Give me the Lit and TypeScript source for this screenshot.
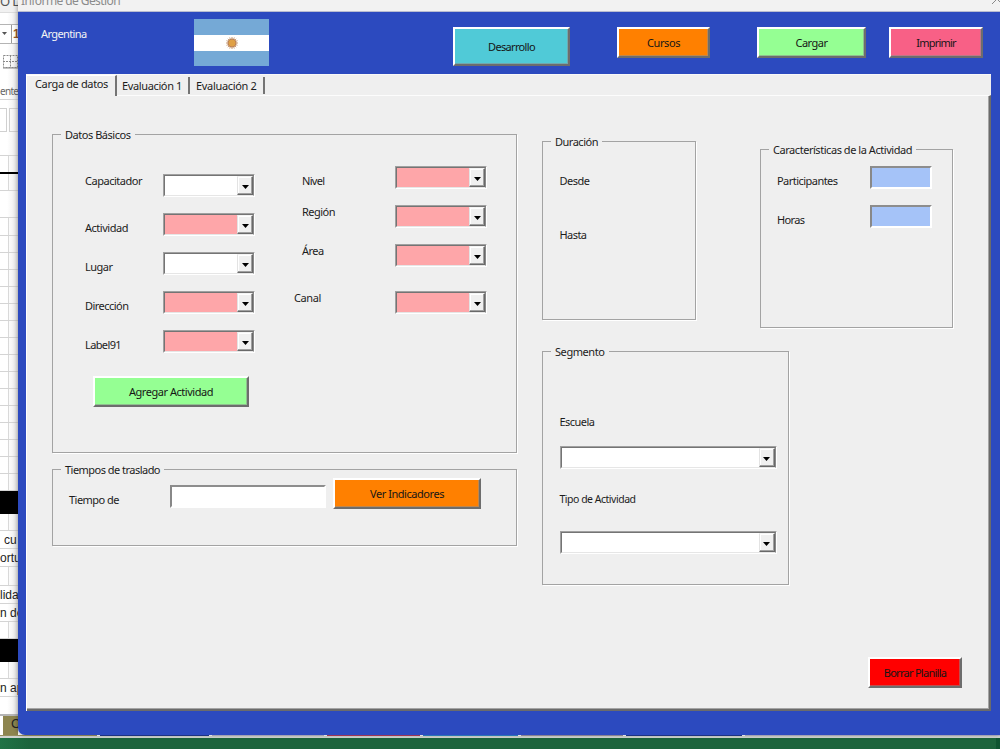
import { LitElement, html, css } from "lit";
import { customElement, property } from "lit/decorators.js";

/* A single line of text whose tracking is adjusted to take up a given width. */
@customElement("fit-text")
class FitText extends LitElement {
  @property({ type: Number }) w = 0;
  static styles = css`
    :host { display: block; white-space: pre; flex: none; }
    span { display: inline-block; }
  `;
  @property() text = "";
  render() {
    return html`<span>${this.text}</span>`;
  }
  updated() {
    const span = this.renderRoot.querySelector("span") as HTMLElement;
    span.style.letterSpacing = "0px";
    const natural = span.getBoundingClientRect().width;
    if (this.w && this.text.length > 1) {
      span.style.letterSpacing = (this.w - natural) / this.text.length + "px";
    }
  }
}

@customElement("combo-box")
class ComboBox extends LitElement {
  static styles = css`
    :host {
      display: flex; box-sizing: border-box; width: 92px; height: 23px; flex: none;
      background: #fff; border: 1px solid; border-color: #a0a0a0 #fff #fff #a0a0a0;
    }
    :host([pink]) { background: #fea6a9; }
    :host([wide]) { width: 217px; }
    .in { flex: 1; display: flex; justify-content: flex-end; border: 1px solid; border-color: #747474 #8a8a8a #e6e6e6 #747474; }
    .btn {
      box-sizing: border-box; width: 16px; display: flex; align-items: center; justify-content: center;
      background: #f0f0f0; border: 1px solid; border-color: #f4f4f4 #696969 #696969 #e3e3e3;
      box-shadow: inset -1px -1px 0 #a0a0a0, inset 1px 1px 0 #fff;
    }
    svg { display: block; margin-top: 2px; }
  `;
  render() {
    return html`<div class="in"><div class="btn"><svg width="7" height="4" viewBox="0 0 7 4"><path d="M0 0H7L3.5 4Z" fill="#000" /></svg></div></div>`;
  }
}

const t = (text: string, w: number) => html`<fit-text .text=${text} .w=${w}></fit-text>`;

@customElement("app-root")
class AppRoot extends LitElement {
  static styles = css`
    :host {
      display: block; position: relative; width: 1000px; height: 749px; overflow: hidden;
      background: #fff; font: 11px/16px "Noto Sans", "DejaVu Sans", sans-serif; color: #1c1c1c;
    }
    .desk { display: flex; flex-direction: column; height: 749px; }
    .sheet { width: 18px; height: 735px; overflow: hidden; display: flex; flex-direction: column; background: linear-gradient(90deg, #fff 40%, #e9e9e9); }
    .sheet > * { box-sizing: border-box; flex: none; white-space: nowrap; overflow: hidden; }
    .top { height: 13px; border-bottom: 1px solid #ddd; background: #f1f1f1; font-size: 13px; line-height: 4px; color: #555; }
    .top span { display: block; margin-top: -1px; letter-spacing: -0.6px; }
    .fontbox { margin-top: 11px; height: 20px; border: 1px solid #b4b4b4; border-width: 1px 0; display: flex; background: #fff; }
    .fontbox svg { margin: 7px 3px 0 2px; flex: none; }
    .fontbox b { border-left: 1px solid #999; padding-left: 1px; color: #965a2d; font: bold 12px/18px "Liberation Sans", Arial, sans-serif; }
    .borders { margin: 11px 0 0 3px; height: 14px; }
    .borders svg { display: block; }
    .ente { margin-top: 13px; height: 18px; border-bottom: 1px solid #d5d5d5; color: #666; font-size: 10px; line-height: 18px; letter-spacing: -0.7px; }
    .fx { margin-top: 8px; height: 24px; display: flex; justify-content: space-between; }
    .fx i { box-sizing: border-box; border: 1px solid #d0d0d0; border-left: 0; width: 7px; }
    .fx i + i { border: 1px solid #d0d0d0; border-right: 0; width: 9px; }
    .cell { border-bottom: 1px solid #d4d4d4; font: 12px/18px "Liberation Sans", Arial, sans-serif; color: #222; }
    .cell.v { background: linear-gradient(#d9d9d9, #d9d9d9) 8px 0 / 1px 100% no-repeat; }
    .h17 { height: 17px; }
    .h18 { height: 18px; }
    .h24 { height: 24px; }
    .h27 { height: 27px; }
    .h19 { height: 19px; }
    .heavy { border-bottom: 2px solid #000; }
    .dark { background: #000; }
    .h23 { height: 23px; }
    .cu { padding-left: 4px; }
    .edge { border-bottom: 2px solid #b5b5b5; }
    .olive { margin-left: 3px; padding-left: 8px; flex: 1 !important; background: #8d854f; font: 13px/15px "Liberation Sans", Arial, sans-serif; color: #222; }
    .tabs-edge { display: flex; height: 1px; gap: 3px; background: #fff; }
    .tabs-edge i { height: 1px; background: #b9b9cc; flex: 1; }
    .tabs-edge .a { flex: 0 0 97px; background: #968f60; }
    .tabs-edge .b { flex: 0 0 109px; background: #223a92; }
    .tabs-edge .c { flex: 0 0 112px; }
    .tabs-edge .d { flex: 0 0 93px; background: #b33c60; }
    .tabs-edge .e { flex: 0 0 95px; background: #2f86cf; }
    .tabs-edge .f { flex: 0 0 102px; background: #9a93a5; }
    .tabs-edge .g { flex: 0 0 116px; background: #223a92; }
    .gap { height: 2px; background: #cfd3cf; }
    .status { flex: 1; background: linear-gradient(90deg, #207346, #1c643c 3%, #1c643c 99.6%, #0f5531 99.6%); }

    .win { position: absolute; left: 18px; top: 0; right: 0; height: 735px; display: flex; flex-direction: column; background: #2c4abf; border-bottom-left-radius: 7px; overflow: hidden; box-shadow: -1px 0 4px rgba(0, 0, 0, 0.3); }
    .title { box-sizing: border-box; height: 12px; flex: none; display: flex; justify-content: space-between; background: #f2f2f2; border-bottom: 1px solid #b9bdd0; color: #8b8b8b; padding-left: 3px; font-size: 12px; line-height: 1px; }
    .title svg { margin: -6px -5px 0 0; flex: none; }
    .head { box-sizing: border-box; height: 62px; flex: none; display: flex; align-items: flex-start; padding-left: 23px; color: #f4f4f4; }
    .head .name { width: 153px; padding-top: 14px; }
    .flag { margin: 7px 184px 0 0; width: 75px; height: 47px; display: block; flex: none; }
    .btn { box-sizing: border-box; display: flex; align-items: center; justify-content: center; flex: none; height: 31px; border: 2px solid; border-color: #fff #6d6d6d #6d6d6d #fff; color: #161616; box-shadow: inset -1px -1px 0 rgba(140, 140, 140, 0.55); }
    .head .btn { margin-top: 15px; }
    .cyan { background: #50cad7; width: 117px; height: 39px !important; margin-right: 47px; }
    .orange { background: #ff8000; }
    .cur { width: 93px; margin-right: 47px; }
    .green { background: #95ff93; }
    .car { width: 109px; margin-right: 23px; }
    .rose { background: #f86086; width: 94px; }

    .panel { margin-left: 8px; width: 965px; height: 637px; flex: none; box-sizing: border-box; display: flex; flex-direction: column; background: #efefef; border-left: 1px solid #fff; border-top: 1px solid #f8f8f8; }
    .tabs { height: 20px; flex: none; display: flex; align-items: flex-start; }
    .tab { box-sizing: border-box; border-right: 2px solid #747474; }
    .t1 { width: 90px; height: 21px; padding: 0 0 0 8px; line-height: 15px; background: #efefef; z-index: 1; border-top: 1px solid #fff; }
    .t2 { width: 73px; height: 17px; margin-top: 2px; padding: 0 0 0 5px; line-height: 17px; }
    .t3 { width: 75px; height: 17px; margin-top: 2px; padding: 0 0 0 6px; line-height: 17px; }
    .page { flex: 1; box-sizing: border-box; border-top: 1px solid #fcfcfc; border-right: 2px solid #6b6b6b; border-bottom: 2px solid #6b6b6b; box-shadow: inset -1px -1px 0 #a5a5a5; display: flex; padding: 1px 0 0 25px; gap: 25px; }

    fieldset { box-sizing: border-box; margin: 0; padding: 0; min-width: 0; border: 1px solid #a3a3a3; box-shadow: 1px 1px 0 #fff; }
    legend { margin-left: 8px; padding: 0 4px; height: 16px; line-height: 17px; }
    .left { width: 465px; display: flex; flex-direction: column; padding-top: 29px; }
    .datos { height: 327px; }
    .form { display: flex; align-items: flex-start; padding-left: 32px; }
    .col { display: flex; flex-direction: column; }
    .l1 { width: 78px; gap: 23px; padding-top: 31px; }
    .l1 fit-text:first-child { margin-bottom: 8px; }
    .c1 { gap: 16px; padding-top: 32px; width: 132px; }
    .l2 { width: 100px; padding-top: 31px; gap: 23px; }
    .l2 fit-text { margin-left: 7px; }
    .l2 fit-text:first-child { margin-bottom: -8px; }
    .l2 fit-text:last-child { margin: 8px 0 0 -1px; }
    .c2 { gap: 16px; padding-top: 24px; }
    .c2 combo-box:last-child { margin-top: 8px; }
    .agregar { width: 156px; margin: 23px 0 0 40px; }
    .tiempos { margin-top: 8px; height: 85px; }
    .trow { display: flex; align-items: flex-start; padding-left: 16px; }
    .trow .lab { width: 101px; padding-top: 15px; }
    .field { box-sizing: border-box; height: 23px; border: 2px solid; border-color: #8d8d8d #fff #fff #888; background: #fff; }
    .tf { width: 156px; margin: 8px 7px 0 0; }
    .ver { width: 148px; margin-top: 1px; }

    .right { flex: 1; display: flex; flex-direction: column; padding-top: 36px; }
    .pair { display: flex; gap: 64px; align-items: flex-start; }
    .dur { width: 154px; height: 187px; }
    .stack { display: flex; flex-direction: column; padding-left: 16.5px; }
    .dur .stack { gap: 38px; padding-top: 24px; }
    .carac { width: 193px; height: 187px; margin-top: 8px; }
    .nums { display: grid; grid-template-columns: 93px 62px; row-gap: 16px; padding: 9px 0 0 16px; }
    .nums fit-text { padding-top: 7px; }
    .nums .field { background: #a5c3f8; }
    .seg { width: 247px; height: 242px; margin-top: 15px; }
    .seg .stack { padding-top: 55px; }
    .seg combo-box { margin-top: 16px; }
    .tipo { margin-top: 22px; font-size: 10.5px; }
    .seg .tipo + combo-box { margin-top: 24px; }
    .borrar { width: 94px; background: #f00; margin: 72px 0 0 326px; }
  `;

  render() {
    return html`
      <div class="desk">
        <div class="sheet">
          <div class="top"><span>O D</span></div>
          <div class="fontbox"><svg width="6" height="4"><path d="M0 0H5L2.5 3Z" fill="#555" /></svg><b>1</b></div>
          <div class="borders"><svg width="15" height="14" fill="none" stroke="#888"><path d="M.5 .5H14.5V12.5H.5ZM7.5 .5V12.5M0 6.5H15" stroke-dasharray="2 1" /><path d="M0 13H15" /></svg></div>
          <div class="ente">ente</div>
          <div class="fx"><i></i><i></i></div>
          <div class="cell h24"></div>
          <div class="cell v h18 heavy"></div>
          <div class="cell v h17"></div>
          <div class="cell h27"></div>
          ${[18, 17, 17, 17, 17, 17, 17, 17, 17, 17, 17, 17, 17, 17, 17].map(
            (h) => html`<div class="cell v ${h === 18 ? "h18" : "h17"}"></div>`
          )}
          <div class="cell v h17"></div>
          <div class="dark h23"></div>
          <div class="cell v h17"></div>
          <div class="cell h18 cu">cu</div>
          <div class="cell h18">ortu</div>
          <div class="cell v h19"></div>
          <div class="cell h18">lida</div>
          <div class="cell h18">n de</div>
          <div class="cell v h17"></div>
          <div class="dark h23"></div>
          <div class="cell v h17"></div>
          <div class="cell h18">n ap</div>
          <div class="cell h19 edge"></div>
          <div class="olive">C</div>
        </div>
        <div class="tabs-edge"><i class="a"></i><i class="b"></i><i class="c"></i><i class="d"></i><i class="e"></i><i class="f"></i><i class="g"></i><i></i></div>
        <div class="gap"></div>
        <div class="status"></div>
      </div>

      <div class="win">
        <div class="title">
          ${t("Informe de Gestión", 99)}
          <svg width="14" height="14" stroke="#8a8a8a" fill="none"><path d="M1 0L11 10M11 0L1 10" /></svg>
        </div>
        <div class="head">
          <div class="name">${t("Argentina", 45.5)}</div>
          <svg class="flag" viewBox="0 0 75 47">
            <rect width="75" height="47" fill="#75a9d6" />
            <rect y="16" width="75" height="16" fill="#fff" />
            <g stroke="#c79c78" stroke-width="1"><path d="M38 18V30M32 24H44M33.8 19.8L42.2 28.2M42.2 19.8L33.8 28.2M35.7 18.5L40.3 29.5M40.3 18.5L35.7 29.5M32.5 21.7L43.5 26.3M32.5 26.3L43.5 21.7" /></g>
            <circle cx="38" cy="24" r="4" fill="#dfa045" stroke="#b98058" />
          </svg>
          <div class="btn cyan">${t("Desarrollo", 47)}</div>
          <div class="btn orange cur">${t("Cursos", 33)}</div>
          <div class="btn green car">${t("Cargar", 32)}</div>
          <div class="btn rose">${t("Imprimir", 39.5)}</div>
        </div>
        <div class="panel">
          <div class="tabs">
            <div class="tab t1">${t("Carga de datos", 73)}</div>
            <div class="tab t2">${t("Evaluación 1", 60)}</div>
            <div class="tab t3">${t("Evaluación 2", 60.5)}</div>
          </div>
          <div class="page">
            <div class="left">
              <fieldset class="datos">
                <legend>${t("Datos Básicos", 65.5)}</legend>
                <div class="form">
                  <div class="col l1">
                    ${t("Capacitador", 57)}${t("Actividad", 43)}${t("Lugar", 27.5)}${t("Dirección", 43.5)}${t("Label91", 36)}
                  </div>
                  <div class="col c1">
                    <combo-box></combo-box><combo-box pink></combo-box><combo-box></combo-box><combo-box pink></combo-box><combo-box pink></combo-box>
                  </div>
                  <div class="col l2">${t("Nivel", 22.5)}${t("Región", 33)}${t("Área", 21.5)}${t("Canal", 27)}</div>
                  <div class="col c2">
                    <combo-box pink></combo-box><combo-box pink></combo-box><combo-box pink></combo-box><combo-box pink></combo-box>
                  </div>
                </div>
                <div class="btn green agregar">${t("Agregar Actividad", 84)}</div>
              </fieldset>
              <fieldset class="tiempos">
                <legend>${t("Tiempos de traslado", 95)}</legend>
                <div class="trow">
                  <div class="lab">${t("Tiempo de", 50)}</div>
                  <div class="field tf"></div>
                  <div class="btn orange ver">${t("Ver Indicadores", 74)}</div>
                </div>
              </fieldset>
            </div>
            <div class="right">
              <div class="pair">
                <fieldset class="dur">
                  <legend>${t("Duración", 43)}</legend>
                  <div class="stack">${t("Desde", 30)}${t("Hasta", 27)}</div>
                </fieldset>
                <fieldset class="carac">
                  <legend>${t("Características de la Actividad", 139)}</legend>
                  <div class="nums">
                    ${t("Participantes", 60.5)}
                    <div class="field"></div>
                    ${t("Horas", 27.5)}
                    <div class="field"></div>
                  </div>
                </fieldset>
              </div>
              <fieldset class="seg">
                <legend>${t("Segmento", 49.5)}</legend>
                <div class="stack">
                  ${t("Escuela", 35)}
                  <combo-box wide></combo-box>
                  <div class="tipo">${t("Tipo de Actividad", 76)}</div>
                  <combo-box wide></combo-box>
                </div>
              </fieldset>
              <div class="btn borrar">${t("Borrar Planilla", 62.5)}</div>
            </div>
          </div>
        </div>
      </div>
    `;
  }
}
